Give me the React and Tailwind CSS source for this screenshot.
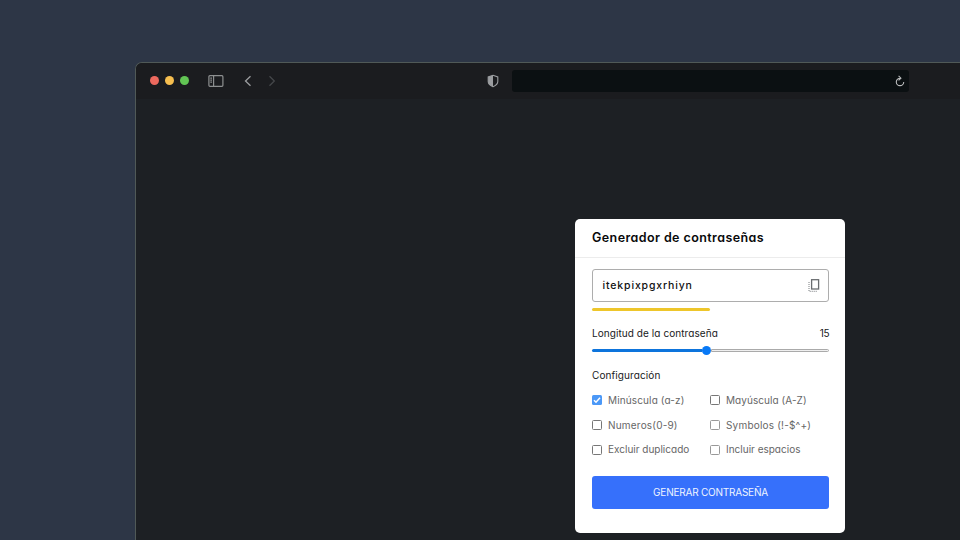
import React from "react";

function Sidebar() {
  return (
    <svg width="16" height="12" viewBox="0 0 16 12" fill="none" stroke="#8d8f90" strokeWidth="1.2">
      <rect x="0.9" y="0.7" width="14" height="10.6" rx="1" />
      <path d="M5.6 .7v10.6M2.3 3.2h1.7M2.3 5.2h1.7M2.3 7.2h1.7" />
    </svg>
  );
}

function Chevron({ flip, color }) {
  return (
    <svg width="8" height="12" viewBox="0 0 8 12" fill="none" stroke={color} strokeWidth="1.3">
      <path d={flip ? "M1.5 1.2 6.3 6l-4.8 4.8" : "M6.5 1.2 1.5 6l5 4.8"} />
    </svg>
  );
}

function Shield() {
  return (
    <svg width="12" height="14" viewBox="0 0 12 14">
      <path d="M6 1.3 10.8 2.9v4.6c0 2.4-2.1 4.1-4.8 5.2-2.7-1.1-4.8-2.8-4.8-5.2V2.9z" fill="none" stroke="#9b9da0" strokeWidth="1.1" />
      <path d="M6 1.3 1.2 2.9v4.6c0 2.4 2.1 4.1 4.8 5.2z" fill="#9b9da0" />
    </svg>
  );
}

function Reload() {
  return (
    <svg width="10" height="12" viewBox="0 0 10 12" fill="none" stroke="#b9bbbc" strokeWidth="1.1">
      <path d="M5 3.2A3.7 3.7 0 1 0 8.7 6.9M3.6 .9 5.9 3.2 3.6 5.3" />
    </svg>
  );
}

function CopyIcon() {
  return (
    <svg width="12" height="13" viewBox="0 0 12 13" fill="none" stroke="#6a6d70">
      <rect x="3.6" y="0.7" width="7" height="9.3" strokeWidth="1.3" />
      <path d="M1 3v9.300h8" strokeDasharray="1 1" strokeWidth="0.9" />
    </svg>
  );
}

function Option({ label, checked, spacing, faint }) {
  return (
    <div className="flex h-[24.7px] items-center">
      {checked ? (
        <span className="flex size-[10px] items-center justify-center rounded-[1.5px] bg-[#4b98f7]">
          <svg width="8" height="8" viewBox="0 0 8 8" fill="none" stroke="white" strokeWidth="1.5">
            <path d="m1 4.2 2 2L7 1.8" />
          </svg>
        </span>
      ) : (
        <span className={`size-[10px] rounded-[1.5px] border ${faint ? "border-[#999]" : "border-[#777]"}`} />
      )}
      <span className={`ml-[6px] whitespace-nowrap text-[10px] text-[#666] ${spacing}`}>{label}</span>
    </div>
  );
}

export default function App() {
  return (
    <div className="h-[540px] w-[960px] overflow-hidden bg-[#2d3646] pl-[135px] pt-[62px] font-['Inter','Liberation_Sans',sans-serif] [font-feature-settings:'cv11','calt'_0]">
      <div className="h-[500px] w-[860px] rounded-tl-[7px] border-l border-t border-[#505957] bg-[#1d2024]">
        <header className="flex h-[36px] items-center rounded-tl-[6px] bg-[#1b1c1f] pl-[14px]">
          <div className="-mt-px flex gap-[6px]">
            <i className="size-[9px] rounded-full bg-[#ed695e]" />
            <i className="size-[9px] rounded-full bg-[#f6be4f]" />
            <i className="size-[9px] rounded-full bg-[#62c554]" />
          </div>
          <div className="ml-[19px]"><Sidebar /></div>
          <div className="ml-[19.5px]"><Chevron color="#9b9d9f" /></div>
          <div className="ml-[16px]"><Chevron flip color="#45474a" /></div>
          <div className="ml-[211px]"><Shield /></div>
          <div className="ml-[13.5px] flex h-[22px] w-[397px] items-center justify-end rounded-[3px] bg-[#0b1012] pr-[4px]">
            <Reload />
          </div>
        </header>
        <main className="pl-[439px] pt-[120px]">
          <section className="h-[314px] w-[270.4px] rounded-[5px] bg-white">
            <div className="flex h-[39px] items-center border-b border-[#ececec] pl-[17px]">
              <h1 className="whitespace-nowrap text-[12.5px] font-semibold tracking-[0.41px] text-[#08090a]">Generador de contraseñas</h1>
            </div>
            <div className="pl-[17px] pr-[16.4px] pt-[11px]">
              <div className="flex h-[33px] items-center justify-between rounded-[3px] border border-[#adadad] pl-[9.5px] pr-[8.5px]">
                <span className="text-[10.5px] font-medium tracking-[0.85px] text-[#111]">itekpixpgxrhiyn</span>
                <CopyIcon />
              </div>
              <div className="mt-[6px] h-[3px] w-[118px] rounded-full bg-[#eec62b]" />
              <div className="mt-[14px] flex h-[16px] items-center justify-between text-[10px] text-[#17191b]">
                <span className="tracking-[0.07px]">Longitud de la contraseña</span>
                <span className="tracking-[-0.5px]">15</span>
              </div>
              <div className="mt-[4px] flex h-[10px] items-center">
                <div className="h-[3px] w-[110px] rounded-l-full bg-[#0d74dc]" />
                <div className="size-[9px] shrink-0 rounded-full bg-[#0879f6]" />
                <div className="h-[3px] flex-1 rounded-r-full border border-[#aaa] bg-[#efefef]" />
              </div>
              <div className="mt-[12px] h-[16px] text-[10px] leading-[16px] tracking-[0.1px] text-[#17191b]">Configuración</div>
              <div className="mt-[5px] grid grid-cols-[118px_1fr]">
                <Option label="Minúscula (a-z)" checked spacing="tracking-[0.13px]" />
                <Option label="Mayúscula (A-Z)" spacing="tracking-[0.06px]" />
                <Option label="Numeros(0-9)" spacing="tracking-[0.2px]" />
                <Option label="Symbolos (!-$^+)" spacing="tracking-[0.2px]" faint />
                <Option label="Excluir duplicado" spacing="tracking-[0px]" />
                <Option label="Incluir espacios" spacing="tracking-[0px]" faint />
              </div>
              <button className="mt-[14px] flex h-[33px] w-full items-center justify-center rounded-[3px] bg-[#3670fb] text-[10px] tracking-[-0.22px] text-[#eef4ff]">
                GENERAR CONTRASEÑA
              </button>
            </div>
          </section>
        </main>
      </div>
    </div>
  );
}
